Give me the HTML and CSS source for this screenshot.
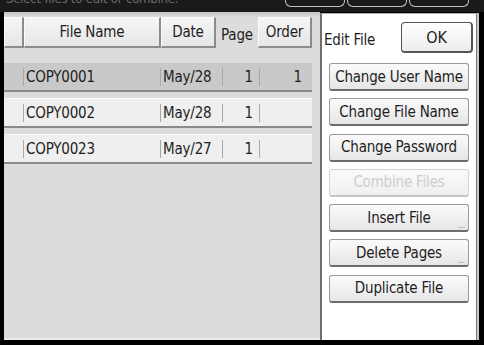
FILE: index.html
```html
<!DOCTYPE html>
<html lang="en">
<head>
    <meta charset="UTF-8">
    <title>Edit File</title>
    <link rel="stylesheet" href="styles.css">
</head>
<body>

<div class="screen">
    <div class="titlebar">
        <span class="title">Select files to edit or combine.</span>
        <div class="tabs">
            <span class="tab"></span>
            <span class="tab"></span>
            <span class="tab"></span>
        </div>
    </div>

    <div class="body">
        <div class="list-panel">
            <div class="list-header">
                <button class="col-btn blank"></button>
                <button class="col-btn name">File Name</button>
                <button class="col-btn date">Date</button>
                <span class="col-label">Page</span>
                <button class="col-btn order">Order</button>
            </div>

            <div class="rows">
                <div class="row selected">
                    <span class="cell c0"></span>
                    <span class="cell c1">COPY0001</span>
                    <span class="cell c2">May/28</span>
                    <span class="cell c3">1</span>
                    <span class="cell c4">1</span>
                </div>
                <div class="row">
                    <span class="cell c0"></span>
                    <span class="cell c1">COPY0002</span>
                    <span class="cell c2">May/28</span>
                    <span class="cell c3">1</span>
                    <span class="cell c4"></span>
                </div>
                <div class="row">
                    <span class="cell c0"></span>
                    <span class="cell c1">COPY0023</span>
                    <span class="cell c2">May/27</span>
                    <span class="cell c3">1</span>
                    <span class="cell c4"></span>
                </div>
            </div>
        </div>

        <div class="edit-panel">
            <div class="edit-head">
                <span class="edit-title">Edit File</span>
                <button class="ok">OK</button>
            </div>
            <div class="actions">
                <button class="action">Change User Name</button>
                <button class="action">Change File Name</button>
                <button class="action">Change Password</button>
                <button class="action" disabled>Combine Files</button>
                <button class="action more">Insert File<span class="dots">...</span></button>
                <button class="action more">Delete Pages<span class="dots">...</span></button>
                <button class="action">Duplicate File</button>
            </div>
        </div>
    </div>
</div>

</body>
</html>
```

FILE: styles.css
```css
body {
    margin: 0;
    background: #000;
    font-family: "DejaVu Sans Condensed", "DejaVu Sans", sans-serif;
    letter-spacing: -0.2px;
}
.screen {
    width: 484px;
    height: 345px;
    background: #000;
    display: flex;
    flex-direction: column;
    overflow: hidden;
}
.titlebar {
    height: 12px;
    display: flex;
    justify-content: space-between;
    overflow: hidden;
    background: #1a1a1a;
}
.title {
    font-size: 13px;
    line-height: 13px;
    margin: -8px 0 0 6px;
    color: #6e6e6e;
    white-space: nowrap;
}
.tabs {
    display: flex;
    gap: 2px;
    margin-right: 15px;
}
.tab {
    width: 58px;
    height: 6px;
    border: 1px solid #c4c4c4;
    border-top: none;
    border-radius: 0 0 6px 6px;
}
.body {
    flex-grow: 1;
    display: flex;
    padding: 0 7px 5px 4px;
}
.list-panel {
    width: 316px;
    box-sizing: border-box;
    padding: 5px 8px 0 0;
    background: linear-gradient(#c4c4c4 0, #dcdcdc 5px, #dcdcdc 100%);
    border-bottom: 2px solid #ececec;
}
.list-header {
    display: flex;
    height: 31px;
}
.col-btn {
    box-sizing: border-box;
    height: 31px;
    padding: 0;
    font-family: inherit;
    letter-spacing: inherit;
    font-size: 15px;
    color: #1e1e1e;
    background: linear-gradient(#f6f6f6, #e6e6e6);
    border: 1px solid #fafafa;
    border-right: 2px solid #8c8c8c;
    border-bottom: 2px solid #8c8c8c;
}
.col-btn.blank { width: 20px; }
.col-btn.name { width: 137px; }
.col-btn.date { width: 55px; }
.col-btn.order { width: 54px; }
.col-label {
    width: 42px;
    font-size: 15px;
    color: #1e1e1e;
    text-align: center;
    line-height: 36px;
}
.rows {
    margin-top: 14px;
    display: flex;
    flex-direction: column;
    gap: 6px;
}
.row {
    height: 30px;
    box-sizing: border-box;
    display: flex;
    align-items: center;
    background: #efefef;
    border-top: 1px solid #fbfbfb;
    border-bottom: 2px solid #8a8a8a;
    font-size: 15px;
    color: #1e1e1e;
}
.row.selected {
    background: #c9c9c9;
    border-top-color: #e0e0e0;
}
.cell {
    height: 18px;
    line-height: 18px;
    box-sizing: border-box;
    white-space: nowrap;
}
.c0 { width: 19px; }
.c1 { width: 137px; border-left: 1px solid #a8a8a8; padding-left: 2px; }
.c2 { width: 62px; border-left: 1px solid #a8a8a8; padding-left: 2px; }
.c3 { width: 37px; border-left: 1px solid #a8a8a8; text-align: right; padding-right: 6px; }
.c4 { width: 53px; border-left: 1px solid #a8a8a8; text-align: right; padding-right: 10px; }
.edit-panel {
    width: 157px;
    box-sizing: border-box;
    margin-top: 1px;
    background: #fff;
    border-left: 2px solid #6e6e6e;
    border-top: 1px solid #b4b4b4;
    border-right: 1px solid #7a7a7a;
    box-shadow: 2px 0 0 #c8c8c8;
}
.edit-head {
    display: flex;
    justify-content: space-between;
    align-items: flex-end;
    padding: 8px 3px 0 2px;
}
.edit-title {
    font-size: 15px;
    color: #1e1e1e;
    line-height: 26px;
}
.ok {
    width: 72px;
    height: 31px;
    box-sizing: border-box;
    font-family: inherit;
    letter-spacing: inherit;
    font-size: 16px;
    color: #1e1e1e;
    background: linear-gradient(#ffffff, #ececec);
    border: 1px solid #555;
    border-right-width: 2px;
    border-bottom-width: 2px;
    border-radius: 4px;
}
.actions {
    margin-top: 10px;
    padding-left: 7px;
    display: flex;
    flex-direction: column;
    gap: 7.3px;
}
.action {
    position: relative;
    width: 140px;
    height: 28px;
    box-sizing: border-box;
    padding: 0;
    font-family: inherit;
    letter-spacing: inherit;
    font-size: 15px;
    color: #1e1e1e;
    background: linear-gradient(#fbfbfb, #e6e6e6);
    border: 1px solid #9a9a9a;
    border-bottom: 2px solid #6c6c6c;
    border-radius: 3px;
    white-space: nowrap;
}
.action:disabled {
    color: #cdcdcd;
    background: linear-gradient(#fafafa, #f0f0f0);
    border-color: #d4d4d4;
    border-bottom-color: #c4c4c4;
}
.dots {
    position: absolute;
    right: 3px;
    bottom: 0;
    font-size: 9px;
    line-height: 9px;
    color: #8a8a8a;
}
```
